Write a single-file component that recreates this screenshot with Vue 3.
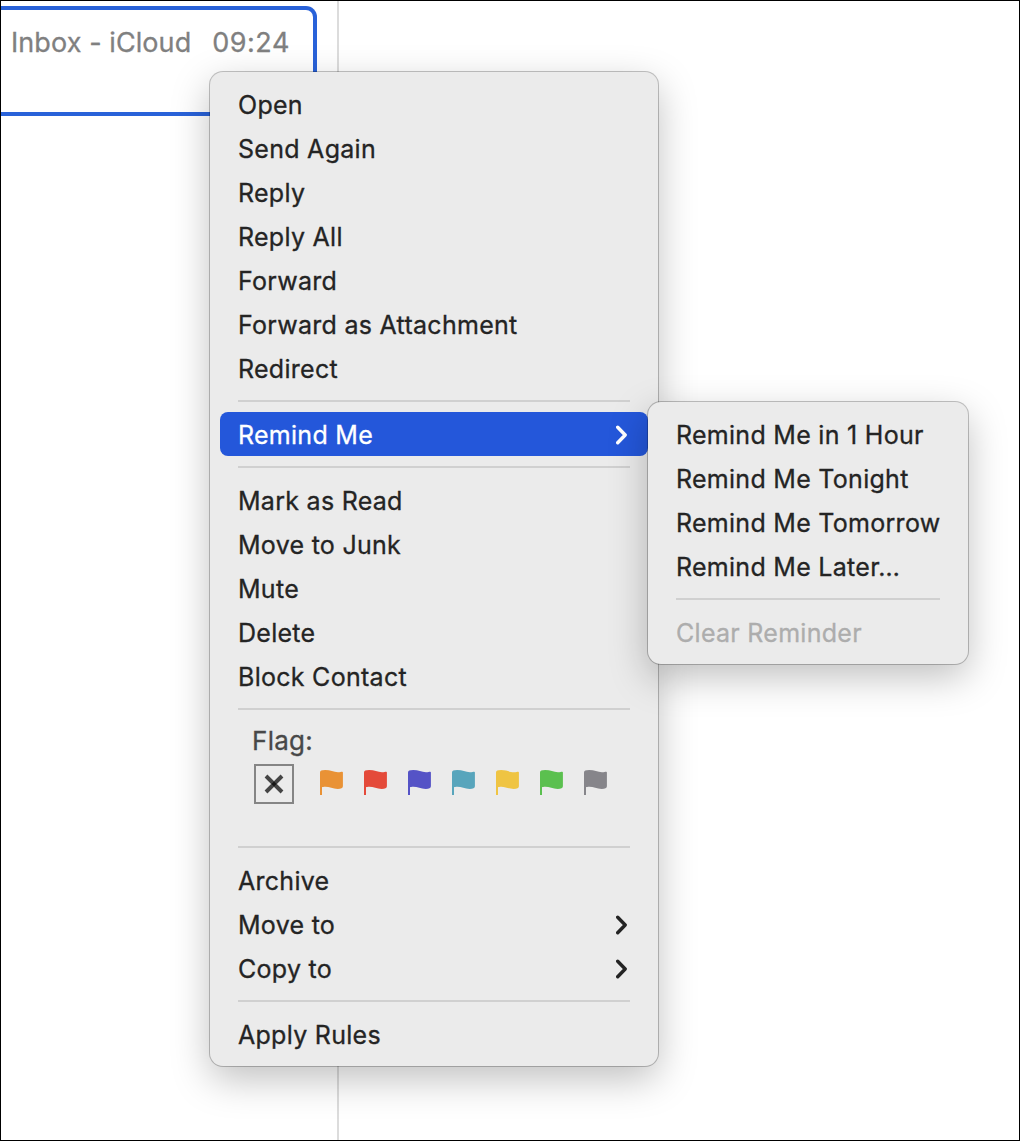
<script setup>
const groups = [
  [
    { label: 'Open' },
    { label: 'Send Again' },
    { label: 'Reply' },
    { label: 'Reply All' },
    { label: 'Forward' },
    { label: 'Forward as Attachment' },
    { label: 'Redirect' },
  ],
  [{ label: 'Remind Me', submenu: true, active: true }],
  [
    { label: 'Mark as Read' },
    { label: 'Move to Junk' },
    { label: 'Mute' },
    { label: 'Delete' },
    { label: 'Block Contact' },
  ],
  'flags',
  [
    { label: 'Archive' },
    { label: 'Move to', submenu: true },
    { label: 'Copy to', submenu: true },
  ],
  [{ label: 'Apply Rules' }],
]

const reminders = [
  [
    { label: 'Remind Me in 1 Hour' },
    { label: 'Remind Me Tonight' },
    { label: 'Remind Me Tomorrow' },
    { label: 'Remind Me Later…' },
  ],
  [{ label: 'Clear Reminder', disabled: true }],
]

const flags = ['#e99235', '#e44a3a', '#5553c6', '#58a5bc', '#efc443', '#5bc04f', '#86858a']
</script>

<template>
  <div class="window">
    <div class="list">
      <div class="message">
        <span>Inbox - iCloud</span>
        <span class="time">09:24</span>
      </div>
    </div>

    <div class="menu main">
      <template v-for="(group, g) in groups" :key="g">
        <div v-if="g > 0" class="separator"></div>
        <div v-if="group === 'flags'" class="flag-section">
          <div class="flag-title">Flag:</div>
          <div class="flag-row">
            <div class="clear-flag">
              <svg width="20" height="20" viewBox="0 0 20 20">
                <path d="M2 2L18 18M18 2L2 18" stroke="#454545" stroke-width="3.9" />
                <path d="M10 7.4L12.6 10L10 12.6L7.4 10Z" fill="#161616" />
              </svg>
            </div>
            <svg v-for="color in flags" :key="color" class="flag" width="24" height="26" viewBox="0 0 24 26">
              <path
                :fill="color"
                d="M0 25V2.4C0 .9 1.700 .1 5.200 .1C10.500 .1 13.500 2.200 18 2.200C20 2.200 21.300 1.700 22.200 1.700Q22.900 1.700 22.900 2.500V16.200C22.900 18 21 18.900 17.700 18.900C12.800 18.900 9.500 16.800 5.200 16.800C3.600 16.800 2.600 17 2 17.300V25Z"
              />
            </svg>
          </div>
        </div>
        <template v-else>
          <div v-for="item in group" :key="item.label" class="item" :class="{ active: item.active }">
            <span>{{ item.label }}</span>
            <svg v-if="item.submenu" class="chevron" width="12" height="20" viewBox="0 0 12 20">
              <path d="M1.700 2.200L9.200 10L1.700 17.800" />
            </svg>
          </div>
        </template>
      </template>
    </div>

    <div class="menu sub">
      <template v-for="(group, g) in reminders" :key="g">
        <div v-if="g > 0" class="separator"></div>
        <div v-for="item in group" :key="item.label" class="item" :class="{ disabled: item.disabled }">
          <span>{{ item.label }}</span>
        </div>
      </template>
    </div>
  </div>
</template>

<style>
body {
  background: #fff;
}
</style>

<style scoped>
.window {
  position: relative;
  box-sizing: border-box;
  width: 1020px;
  height: 1141px;
  overflow: hidden;
  border: 1px solid #000;
  background: #fff;
  color: #242424;
  font-family: Inter, 'Liberation Sans', sans-serif;
  font-size: 25px;
  letter-spacing: 0.28px;
  -webkit-text-stroke: 0.3px currentColor;
}
.list {
  box-sizing: border-box;
  width: 338px;
  height: 100%;
  padding-top: 5px;
  border-right: 2px solid #dcdcdc;
}
.message {
  box-sizing: border-box;
  display: flex;
  width: 316px;
  height: 110px;
  padding: 16px 0 0 10px;
  border: 4px solid #2962d9;
  border-left: 0;
  border-radius: 0 11px 11px 0;
  color: #808080;
  font-size: 27px;
  letter-spacing: 0.08px;
  line-height: 33px;
  white-space: nowrap;
}
.time {
  margin-left: 21px;
  letter-spacing: 0.5px;
}
.menu {
  position: absolute;
  box-sizing: border-box;
  padding: 10px;
  border-radius: 13px;
  background: #ebebeb;
  box-shadow: 0 0 0 1px rgba(0, 0, 0, 0.23), 0 13px 38px rgba(0, 0, 0, 0.25);
}
.main {
  left: 209px;
  top: 71px;
  width: 448px;
}
.sub {
  left: 647px;
  top: 401px;
  width: 320px;
}
.item {
  box-sizing: border-box;
  display: flex;
  align-items: center;
  justify-content: space-between;
  height: 44px;
  padding: 2px 20px 0 18px;
  border-radius: 8px;
  line-height: 42px;
  white-space: nowrap;
}
.item.active {
  background: #2457da;
  color: #fff;
}
.disabled {
  color: #adadad;
}
.chevron path {
  fill: none;
  stroke: currentColor;
  stroke-width: 3.4;
  stroke-linecap: round;
  stroke-linejoin: round;
}
.separator {
  height: 2px;
  margin: 10px 18px;
  background: #d0d0d0;
}
.flag-section {
  box-sizing: border-box;
  height: 116px;
  padding: 4px 0 0 34px;
}
.flag-title {
  height: 40px;
  margin-left: -2px;
  color: #484848;
  font-size: 26px;
  line-height: 33px;
}
.flag-row {
  display: flex;
  align-items: flex-start;
}
.clear-flag {
  box-sizing: border-box;
  display: flex;
  align-items: center;
  justify-content: center;
  width: 40px;
  height: 40px;
  margin-right: 6px;
  border: 2px solid #858585;
}
.flag {
  margin: 6px 0 0 20px;
}
</style>
